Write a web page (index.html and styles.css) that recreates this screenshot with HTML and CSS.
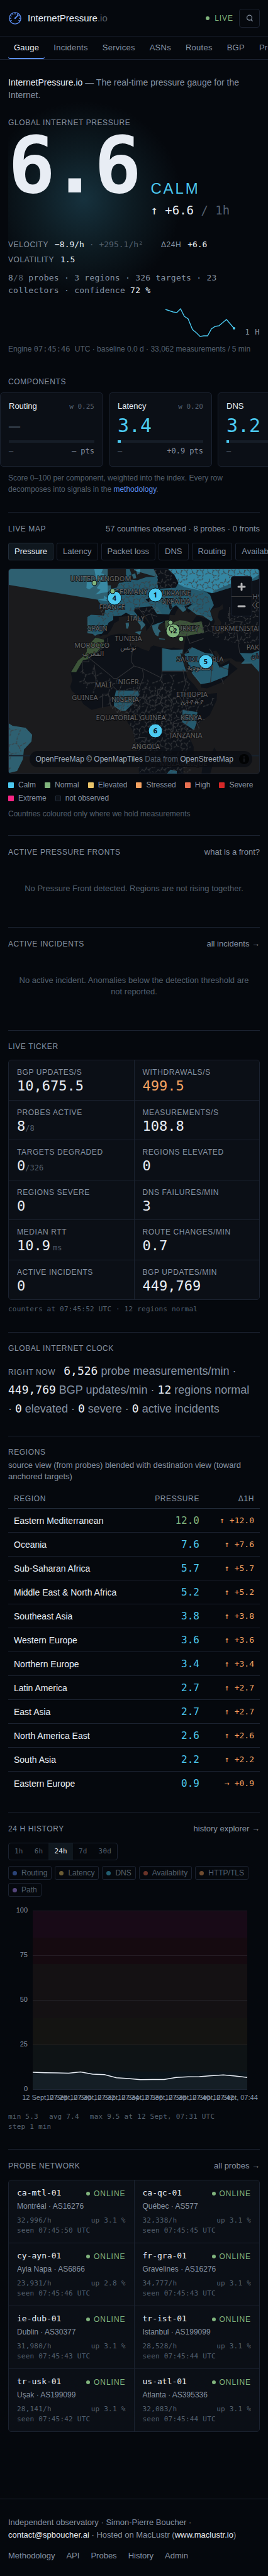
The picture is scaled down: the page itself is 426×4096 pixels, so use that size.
FILE: index.html
```html
<!DOCTYPE html>
<html lang="en">
<head>
    <meta charset="utf-8">
    <meta name="viewport" content="width=device-width, initial-scale=1">
    <title>InternetPressure.io</title>
    <link rel="stylesheet" href="styles.css">
</head>
<body>
    <header class="topbar">
        <a class="brand" href="#">
            <svg class="brand-icon" viewBox="0 0 24 24" fill="none" stroke="#5b8def" stroke-width="1.4" stroke-linecap="round">
                <circle cx="12" cy="12" r="10"/>
                <path d="M2.8 12h2M19.2 12h2M12 2.8v2M4 7.4l1.7 1M7.4 4l1 1.7M16.6 4l-1 1.7M20 7.4l-1.2.7M4 16.6l1.7-1M20 16.6l-1.7-1"/>
                <path d="M12 12l5.2-5.4" stroke-width="2"/>
                <circle cx="12" cy="12" r="0.6" fill="#5b8def"/>
            </svg>
            <span>InternetPressure<span class="brand-tld">.io</span></span>
        </a>
        <div class="topbar-right">
            <span class="live"><span class="dot"></span>LIVE</span>
            <button class="search-btn" type="button" aria-label="Search">
                <svg width="12" height="12" viewBox="0 0 12 12" fill="none" stroke="#8793a3" stroke-width="1.3">
                    <circle cx="5.5" cy="5.2" r="4"/>
                    <path d="M8 8.200l2.600 2.600"/>
                </svg>
            </button>
        </div>
    </header>

    <nav class="tabs">
        <a class="tab active" href="#">Gauge</a>
        <a class="tab" href="#">Incidents</a>
        <a class="tab" href="#">Services</a>
        <a class="tab" href="#">ASNs</a>
        <a class="tab" href="#">Routes</a>
        <a class="tab" href="#">BGP</a>
        <a class="tab" href="#">Probes</a>
    </nav>

    <main>
        <p class="intro"><strong>InternetPressure.io</strong> — The real-time pressure gauge for the Internet.</p>

        <section class="hero">
            <h1 class="label">Global Internet Pressure</h1>
            <div class="hero-main">
                <div class="big-number">6.6</div>
                <div class="hero-side">
                    <div class="status">CALM</div>
                    <div class="delta">↑ +6.6 <span class="dim">/ 1h</span></div>
                </div>
            </div>
            <div class="stats">
                <span><span class="label">Velocity</span> <b>−8.9/h</b> <span class="dim">· +295.1/h²</span></span>
                <span><span class="label">Δ24h</span> <b>+6.6</b></span>
                <span><span class="label">Volatility</span> <b>1.5</b></span>
            </div>
            <p class="coverage">8<span class="dim">/8</span> probes · 3 regions · 326 targets · 23 collectors · confidence <b>72 %</b></p>
            <div class="spark-row">
                <svg class="spark" viewBox="0 0 112 50" fill="none">
                    <path d="M1 2L7 4 13 6 19 7 25 1 31 13 37 17 44 34 50 39 56 45 62 44 68 44 74 33 80 29 86 28 92 23 98 18 110 32" stroke="#4cc9f0" stroke-width="1.4"/>
                    <circle cx="110" cy="32" r="2" fill="#4cc9f0"/>
                </svg>
                <span class="spark-label">1 H</span>
            </div>
            <p class="note engine">Engine <span class="mono">07:45:46 </span>UTC · baseline 0.0 d · 33,062 measurements / 5 min</p>
        </section>

        <section class="components">
            <div class="head"><h2 class="label">Components</h2></div>
            <div class="cards">
                <article class="card">
                    <div class="card-top"><h3>Routing</h3><span class="weight">w 0.25</span></div>
                    <div class="card-value none">—</div>
                    <div class="bar"></div>
                    <div class="card-foot"><span class="dim">—</span><span>— pts</span></div>
                </article>
                <article class="card">
                    <div class="card-top"><h3>Latency</h3><span class="weight">w 0.20</span></div>
                    <div class="card-value">3.4</div>
                    <div class="bar"><div class="bar-fill" style="width: 3.4%"></div></div>
                    <div class="card-foot"><span class="dim">—</span><span>+0.9 pts</span></div>
                </article>
                <article class="card">
                    <div class="card-top"><h3>DNS</h3><span class="weight">w 0.15</span></div>
                    <div class="card-value">3.2</div>
                    <div class="bar"><div class="bar-fill" style="width: 3.2%"></div></div>
                    <div class="card-foot"><span class="dim">—</span><span>+0.6 pts</span></div>
                </article>
            </div>
            <p class="note">Score 0–100 per component, weighted into the index. Every row decomposes into signals in the <a href="#">methodology</a>.</p>
        </section>

        <section class="section">
            <div class="head">
                <h2 class="label">Live map</h2>
                <span class="head-note">57 countries observed · 8 probes · 0 fronts</span>
            </div>
            <div class="filters">
                <button class="filter active" type="button">Pressure</button>
                <button class="filter" type="button">Latency</button>
                <button class="filter" type="button">Packet loss</button>
                <button class="filter" type="button">DNS</button>
                <button class="filter" type="button">Routing</button>
                <button class="filter" type="button">Availability</button>
            </div>
            <div class="map">
                <svg class="map-canvas" viewBox="0 0 398 325" preserveAspectRatio="xMidYMid slice">
                    <defs>
                        <pattern id="admin" width="46" height="42" patternUnits="userSpaceOnUse">
                            <path class="admin" d="M0 12l7 3 5-6 8 4 3 8 8-3 6 5 9-11M12 9l2-9M23 21l-3 9 6 6-2 6M37 23l4 8-5 11M0 31l9-4 11 3M20 13l7-8 9 1 3-6M26 36l10-3M9 27l-3-12"/>
                        </pattern>
                        <pattern id="adminWide" width="74" height="68" patternUnits="userSpaceOnUse">
                            <path class="admin" d="M0 20l18-4 10 10 20-5 8 10 18-11M28 26l-5 16 10 10-4 16M56 31l6 14-9 23M0 50l23-8M18 16l6-16M48 21l4-21M33 52l21-4"/>
                        </pattern>
                    </defs>
                    <g transform="scale(.546) translate(-26 -58)">
                        <!-- land -->
                        <g class="land">
                            <path d="M276 256l25 6 20-11 22-5 28 0 4 12-2 10 8 10 17 4 15 8 21 7 5-12 8-5 18 5 25 4 16-3 20 4 3 10-8 0 18 43 7 31 20 21 15 20 10 8 41-4-1 21-20 43-30 23-22 21-8 20 13 28 0 40-30 18v20H405l-2-55-10-46-8-28-14-21 5-25-8-15-17 5-19-13-34 5-31 8-23-16-15-23-20-17-4-12 6-20-5-23 18-29 30-28 1-17 16-18z"/>
                            <path d="M537 278l6-30 30-8 2-28-15 0 13-19 30 10 17 8-5-40-10-20-2-9 7-12 20-15 36-5 20-9 69-18v276l-22-31-46-1-14-10-26 3-17-25-10 2 17 30 6 10 25-14 2 7 22 18-19 15-26 24-44 18-18-2v-15l-12-15-23-26-15-50z"/>
                            <path d="M400 172l23-4 20 0 14 22 38-4-2 19-12 10-20 0-16 10-9-10-11-20-20-10z"/>
                            <path d="M255 197l10-6 38 2 4-18-20-23-2-5 18-4 0-8 10 7 7-27 20-3 7-14 10-1 10-5v-34h11l5 14-3 16 20 2 27-9 30-1 6-24 30-1V58h265v29l-118 28-20 15 8 5 11 30-11 17 8 26-5 4-25-17-17-2-20-15-8-5 18-13-26 7 6 11-10 7-10-10-10-10-10 7-6 10-4 10-36-2-14-22-50 4-3 10 34 40-14 16v-13l-13-17-20-16-10-5-13 8-24 2v11l-13 7-10 20-10 13-13 2-7 4-7-6-15-1z"/>
                            <path d="M624 577l7 12-19 66h-25l5-38 22-14z"/>
                        </g>
                        <path d="M612 182l8-9 20-5 8-8 2 14-12 6-4 18 10 14-2 18 12 10-6 6-20-2-10-14 8-20z" class="sea"/>
                        <!-- observed countries -->
                        <g class="calm">
                            <path d="M255 197l10-6 38 2 4-18-20-23-2-5 18-4 0-8 10 7 7-27 20-3 7-14 10-1 10-5v-34h11l5 14-3 16 20 2 27-9 30-1 6 16-3 17 50-5 10-12 83 30 9 7 11 30-11 17 8 26-5 4-25-17-17-2-20-15-8-5 18-13-26 7 6 11-10 7-10-10-10-10-10 7-6 10-4 10-36-2-14-22-50 4-3 10 34 40-14 16v-13l-13-17-20-16-10-5-13 8-24 2v11l-13 7-10 20-10 13-13 2-7 4-7-6-15-1z"/>
                            <path d="M490 58h264v16l-21 14-60 12-36 15-20 13-80-18-24-12z"/>
                            <path d="M443 222l15-6 20-6-15 10-3 10 9 10-5 2-3 12-8-4-8-16zM463 259l17 2 1 2-17-1zM393 241l19-3-4 12zM366 215l9-2 1 8-3 10-5 0z"/>
                            <path d="M384 74l10-4 3 14-8 2zM396 60l12-2 0 12-8 4z"/>
                            <path d="M472 288l28 5 33-1-2 13-6-3 17 53h-70z"/>
                            <path d="M547 292l13-7 37 17 23 3 20 40 27-12-4 35-50 20-28 5-25-31-23-57 14-4z"/>
                            <path d="M698 302l35 1 22-8v63l-22-25-31 1 11-12z"/>
                            <path d="M338 411l65 1 2 13-22 29-17 16h-15l-19-13 1-23z"/>
                            <path d="M532 468l43 6-3 34-7 19-35-24z"/>
                            <path d="M26 507l11 7 38 6 19 20-2 20-22 23-3 29-17 34-24 6z"/>
                            <path d="M485 655l12-13 18 4v9z"/>
                            <path d="M275 58h25l-5 12 8 2-1 13 11 13 1 7h9v10l-8 10-18 2-19 5 15-14-11-5 11-15-13-13zM253 95h17l3 13-13 9-8-4z"/>
                        </g>
                        <g class="calm">
                            <path d="M26 58h288v94L26 104z"/>
                            <path d="M390 58h364v29l-134 41L392 62z"/>
                        </g>
                        <path class="land" d="M448 58h42l18 17 12 23-8 14-49 3-5-15 3-18z"/>
                        <path class="land" d="M485 146l10 5 7 20-7 6-4-16zM424 146l22-8 6 6-20 10z"/>
                        <g class="normal">
                            <path d="M480 208l16-2 6 8 21-7 17 1 20 7 27-5 8 33-25 4-27 6-20-1-23-4-17-16z"/>
                            <path d="M278 257l25 6v15l-23 24-22 4v14l-16 3-20 35h-15l20-33 20-17 6-10v-16l14-12z"/>
                        </g>
                        <!-- borders -->
                        <path d="M490 58h264v16l-117 41-20 13-97-30z" fill="url(#admin)"/>
                        <path d="M310 145l40-45 110-10 5 30 50-5 90 15 15 75-30-15-60-22-60 4-10 14-40 0-50-8-30 15-25 5-10 20-40 15z" fill="url(#admin)"/>
                        <path d="M545 250l55-40 10 0 10 30 30 0 15-60 89-40v130l-60 5-40-10-60-20-50 10z" fill="url(#admin)"/>
                        <path d="M480 208l60 0 50 5 5 30-50 8-50-6z" fill="url(#admin)"/>
                        <path d="M448 60h42l25 40-5 12-50 2z" fill="url(#admin)"/>
                        <path d="M395 400h110l40 60 10 110v80H405l-20-130-50-50 5-58z" fill="url(#admin)"/>
                        <path d="M215 375l45-40 90 60 60-10 60-20h70l30 60 60 10-50 90-60 20-180-70z" fill="url(#adminWide)"/>
                        <path d="M26 515l50 12 0 40-50 80z" fill="url(#adminWide)"/>
                        <path class="border" d="M472 288v122M472 355h75M380 275l5 25-2 28 8 12 25 8 57 28M391 340l-8 6-42 30-10 0-5-5-66-54M342 378l-4 10M259 308v20h-19v35M275 336l5 52-38 2M313 258l0 20-55 40M330 400l10 10M415 350l4 20-16 42M472 408h-12l-4 40M533 350l8 40-10 30 10 40M530 505l-25 3-2 40M403 548h20v20h30l5 20M298 462v-40l18 0 8 40M404 172l18 22 18-6 8 22-10 16M440 190l18 6M543 248l10 26 40-14M560 285l-20 18M640 342l25 8M613 388l6-60M645 375l6 18M620 305l-10-15M668 168v40l40 4M698 302l-8-60"/>
                        <path class="line" d="M26 601h728"/>
                    </g>
                    <g class="places">
                        <text x="146" y="19">UNITED KINGDOM</text>
                        <text x="164" y="64">FRANCE</text>
                        <text x="194" y="40">GERMANY</text>
                        <text x="266" y="42">UKRAINE</text>
                        <text x="266" y="55">УКРАЇНА</text>
                        <text x="202" y="82">ITALY</text>
                        <text x="141" y="98">SPAIN</text>
                        <text x="190" y="114">TUNISIA</text>
                        <text x="190" y="128">تونس</text>
                        <text x="132" y="125">MOROCCO</text>
                        <text x="134" y="138">المغرب</text>
                        <text x="282" y="98">TURKEY</text>
                        <text x="363" y="98">TURKMENISTAN</text>
                        <text x="388" y="48">KAZAKHSTAN</text>
                        <text x="388" y="61">ҚАЗАҚСТАН</text>
                        <text x="403" y="128">PAKISTAN</text>
                        <text x="403" y="142">پاکستان</text>
                        <text x="304" y="147">SAUDI ARABIA</text>
                        <text x="304" y="160">السعودية</text>
                        <text x="190" y="183">NIGER</text>
                        <text x="150" y="188">MALI</text>
                        <text x="121" y="208">GUINEA</text>
                        <text x="185" y="211">NIGERIA</text>
                        <text x="194" y="240">EQUATORIAL GUINEA</text>
                        <text x="291" y="203">ETHIOPIA</text>
                        <text x="291" y="215">ኢትዮጵያ</text>
                        <text x="290" y="240">KENYA</text>
                        <text x="281" y="268">TANZANIA</text>
                        <text x="218" y="286">ANGOLA</text>
                        <text x="278" y="313">MOZAMBIQUE</text>
                    </g>
                    <g class="clusters">
                        <circle cx="168" cy="46" r="11"/><text x="168" y="50">4</text>
                        <circle cx="233" cy="41" r="11"/><text x="233" y="45">1</text>
                        <circle class="ok" cx="261" cy="98" r="11"/><text x="261" y="102">12</text>
                        <circle cx="313" cy="147" r="11"/><text x="313" y="151">5</text>
                        <circle cx="233" cy="257" r="11"/><text x="233" y="261">6</text>
                        <circle class="ok" cx="136" cy="22" r="4"/>
                        <circle class="ok" cx="165" cy="35" r="4"/>
                        <circle class="ok" cx="257" cy="85" r="4"/>
                        <circle class="ok" cx="259" cy="95" r="4"/>
                        <circle class="ok" cx="274" cy="111" r="4"/>
                    </g>
                </svg>
                <div class="map-zoom">
                    <button type="button" aria-label="Zoom in"><svg width="16" height="16" viewBox="0 0 16 16" stroke="#b4b4b6" stroke-width="3" stroke-linecap="round"><path d="M3 8h10M8 3v10"/></svg></button>
                    <button type="button" aria-label="Zoom out"><svg width="16" height="16" viewBox="0 0 16 16" stroke="#b4b4b6" stroke-width="3" stroke-linecap="round"><path d="M3 8h10"/></svg></button>
                </div>
                <div class="map-credit">
                    <span><a href="#">OpenFreeMap</a> <a href="#">© OpenMapTiles</a> Data from <a href="#">OpenStreetMap</a></span>
                    <svg width="16" height="16" viewBox="0 0 16 16"><circle cx="8" cy="8" r="8" fill="#020304"/><path d="M8 3.500v2M8 7v5.500" stroke="#14171c" stroke-width="2.600"/></svg>
                </div>
            </div>
            <ul class="legend">
                <li><i class="calm-bg"></i>Calm</li>
                <li><i class="normal-bg"></i>Normal</li>
                <li><i class="elevated-bg"></i>Elevated</li>
                <li><i class="stressed-bg"></i>Stressed</li>
                <li><i class="high-bg"></i>High</li>
                <li><i class="severe-bg"></i>Severe</li>
                <li><i class="extreme-bg"></i>Extreme</li>
                <li><i class="unseen-bg"></i>not observed</li>
            </ul>
            <p class="note">Countries coloured only where we hold measurements</p>
        </section>

        <section class="section">
            <div class="head">
                <h2 class="label">Active pressure fronts</h2>
                <a class="head-note" href="#">what is a front?</a>
            </div>
            <p class="empty">No Pressure Front detected. Regions are not rising together.</p>
        </section>

        <section class="section">
            <div class="head">
                <h2 class="label">Active incidents</h2>
                <a class="head-note" href="#">all incidents →</a>
            </div>
            <p class="empty">No active incident. Anomalies below the detection threshold are not reported.</p>
        </section>

        <section class="section ticker">
            <div class="head"><h2 class="label">Live ticker</h2></div>
            <div class="grid">
                <div class="cell"><div class="label">BGP updates/s</div><div class="value">10,675.5</div></div>
                <div class="cell"><div class="label">Withdrawals/s</div><div class="value warn">499.5</div></div>
                <div class="cell"><div class="label">Probes active</div><div class="value">8<small>/8</small></div></div>
                <div class="cell"><div class="label">Measurements/s</div><div class="value">108.8</div></div>
                <div class="cell"><div class="label">Targets degraded</div><div class="value">0<small>/326</small></div></div>
                <div class="cell"><div class="label">Regions elevated</div><div class="value">0</div></div>
                <div class="cell"><div class="label">Regions severe</div><div class="value">0</div></div>
                <div class="cell"><div class="label">DNS failures/min</div><div class="value">3</div></div>
                <div class="cell"><div class="label">Median RTT</div><div class="value">10.9<small class="unit">ms</small></div></div>
                <div class="cell"><div class="label">Route changes/min</div><div class="value">0.7</div></div>
                <div class="cell"><div class="label">Active incidents</div><div class="value">0</div></div>
                <div class="cell"><div class="label">BGP updates/min</div><div class="value">449,769</div></div>
            </div>
            <p class="small-mono">counters at 07:45:52 UTC · 12 regions normal</p>
        </section>

        <section class="section clock-section">
            <div class="head"><h2 class="label">Global Internet clock</h2></div>
            <p class="clock"><span class="label">Right now</span> <b>6,526</b> probe measurements/min · <b>449,769</b> BGP updates/min · <b>12</b> regions normal ·&nbsp;<b>0</b> elevated · <b>0</b> severe · <b>0</b> active incidents</p>
        </section>

        <section class="section regions">
            <h2 class="label">Regions</h2>
            <p class="sub">source view (from probes) blended with destination view (toward anchored targets)</p>
            <table>
                <thead>
                    <tr><th class="label">Region</th><th class="label">Pressure</th><th class="label">Δ1h</th></tr>
                </thead>
                <tbody>
                    <tr><td>Eastern Mediterranean</td><td class="ok">12.0</td><td>↑ +12.0</td></tr>
                    <tr><td>Oceania</td><td>7.6</td><td>↑ +7.6</td></tr>
                    <tr><td>Sub-Saharan Africa</td><td>5.7</td><td>↑ +5.7</td></tr>
                    <tr><td>Middle East &amp; North Africa</td><td>5.2</td><td>↑ +5.2</td></tr>
                    <tr><td>Southeast Asia</td><td>3.8</td><td>↑ +3.8</td></tr>
                    <tr><td>Western Europe</td><td>3.6</td><td>↑ +3.6</td></tr>
                    <tr><td>Northern Europe</td><td>3.4</td><td>↑ +3.4</td></tr>
                    <tr><td>Latin America</td><td>2.7</td><td>↑ +2.7</td></tr>
                    <tr><td>East Asia</td><td>2.7</td><td>↑ +2.7</td></tr>
                    <tr><td>North America East</td><td>2.6</td><td>↑ +2.6</td></tr>
                    <tr><td>South Asia</td><td>2.2</td><td>↑ +2.2</td></tr>
                    <tr><td>Eastern Europe</td><td>0.9</td><td>→ +0.9</td></tr>
                </tbody>
            </table>
        </section>

        <section class="section history">
            <div class="head">
                <h2 class="label">24 h history</h2>
                <a class="head-note" href="#">history explorer →</a>
            </div>
            <div class="ranges">
                <button type="button">1h</button>
                <button type="button">6h</button>
                <button type="button" class="active">24h</button>
                <button type="button">7d</button>
                <button type="button">30d</button>
            </div>
            <div class="chips">
                <button class="chip" type="button"><i class="routing-bg"></i>Routing</button>
                <button class="chip" type="button"><i class="latency-bg"></i>Latency</button>
                <button class="chip" type="button"><i class="dns-bg"></i>DNS</button>
                <button class="chip" type="button"><i class="avail-bg"></i>Availability</button>
                <button class="chip" type="button"><i class="http-bg"></i>HTTP/TLS</button>
                <button class="chip" type="button"><i class="path-bg"></i>Path</button>
            </div>
            <svg class="chart" viewBox="0 0 400 322">
                <rect x="39" y="14" width="341" height="43" fill="#180a17"/>
                <rect x="39" y="57" width="341" height="42" fill="#150a10"/>
                <rect x="39" y="99" width="341" height="86" fill="#141113"/>
                <rect x="39" y="185" width="341" height="43" fill="#141412"/>
                <rect x="39" y="228" width="341" height="42" fill="#0e1315"/>
                <rect x="39" y="270" width="341" height="29" fill="#0a141b"/>
                <path d="M39 14.500h341M39 85.500h341M39 156.500h341M39 227.500h341" stroke="#94a3b8" stroke-opacity=".13"/>
                <path d="M39 271l19 .7 19 .3 19 .4 19-1.800 19 3.500 19 .7 19 4.900 19 1.400 19 1.700 19-.3h19l19-3.200 19-1 18-.4 19-1.400 19-1.300 19 1.700 19 2.400V299H39z" fill="#141e25"/>
                <path d="M39 271l19 .7 19 .3 19 .4 19-1.800 19 3.500 19 .7 19 4.900 19 1.400 19 1.700 19-.3h19l19-3.200 19-1 18-.4 19-1.400 19-1.300 19 1.700 19 2.400" fill="none" stroke="#e8edf4" stroke-width="1.500"/>
                <path d="M39 298.500h341" stroke="#1c2432"/>
                <g class="axis-y">
                    <text x="31" y="17">100</text>
                    <text x="31" y="88">75</text>
                    <text x="31" y="159">50</text>
                    <text x="31" y="230">25</text>
                    <text x="31" y="301">0</text>
                </g>
                <g class="axis-x">
                    <text x="58" y="315">12 Sept, 07:28</text>
                    <text x="96" y="315">12 Sept, 07:30</text>
                    <text x="134" y="315">12 Sept, 07:32</text>
                    <text x="172" y="315">12 Sept, 07:34</text>
                    <text x="210" y="315">12 Sept, 07:36</text>
                    <text x="247" y="315">12 Sept, 07:38</text>
                    <text x="285" y="315">12 Sept, 07:40</text>
                    <text x="323" y="315">12 Sept, 07:42</text>
                    <text x="361" y="315">12 Sept, 07:44</text>
                </g>
            </svg>
            <p class="small-mono summary"><span>min 5.3</span><span>avg 7.4</span><span>max 9.5 at 12 Sept, 07:31 UTC</span><span>step 1 min</span></p>
        </section>

        <section class="section probes">
            <div class="head">
                <h2 class="label">Probe network</h2>
                <a class="head-note" href="#">all probes →</a>
            </div>
            <div class="grid">
                <div class="cell probe">
                    <div class="row"><b>ca-mtl-01</b><span class="online"><span class="dot"></span>ONLINE</span></div>
                    <div class="place">Montréal · AS16276</div>
                    <div class="row small-mono"><span>32,996/h</span><span>up 3.1 %</span></div>
                    <div class="small-mono">seen 07:45:50 UTC</div>
                </div>
                <div class="cell probe">
                    <div class="row"><b>ca-qc-01</b><span class="online"><span class="dot"></span>ONLINE</span></div>
                    <div class="place">Québec · AS577</div>
                    <div class="row small-mono"><span>32,338/h</span><span>up 3.1 %</span></div>
                    <div class="small-mono">seen 07:45:45 UTC</div>
                </div>
                <div class="cell probe">
                    <div class="row"><b>cy-ayn-01</b><span class="online"><span class="dot"></span>ONLINE</span></div>
                    <div class="place">Ayia Napa · AS6866</div>
                    <div class="row small-mono"><span>23,931/h</span><span>up 2.8 %</span></div>
                    <div class="small-mono">seen 07:45:46 UTC</div>
                </div>
                <div class="cell probe">
                    <div class="row"><b>fr-gra-01</b><span class="online"><span class="dot"></span>ONLINE</span></div>
                    <div class="place">Gravelines · AS16276</div>
                    <div class="row small-mono"><span>34,777/h</span><span>up 3.1 %</span></div>
                    <div class="small-mono">seen 07:45:43 UTC</div>
                </div>
                <div class="cell probe">
                    <div class="row"><b>ie-dub-01</b><span class="online"><span class="dot"></span>ONLINE</span></div>
                    <div class="place">Dublin · AS30377</div>
                    <div class="row small-mono"><span>31,980/h</span><span>up 3.1 %</span></div>
                    <div class="small-mono">seen 07:45:43 UTC</div>
                </div>
                <div class="cell probe">
                    <div class="row"><b>tr-ist-01</b><span class="online"><span class="dot"></span>ONLINE</span></div>
                    <div class="place">Istanbul · AS199099</div>
                    <div class="row small-mono"><span>28,528/h</span><span>up 3.1 %</span></div>
                    <div class="small-mono">seen 07:45:44 UTC</div>
                </div>
                <div class="cell probe">
                    <div class="row"><b>tr-usk-01</b><span class="online"><span class="dot"></span>ONLINE</span></div>
                    <div class="place">Uşak · AS199099</div>
                    <div class="row small-mono"><span>28,141/h</span><span>up 3.1 %</span></div>
                    <div class="small-mono">seen 07:45:42 UTC</div>
                </div>
                <div class="cell probe">
                    <div class="row"><b>us-atl-01</b><span class="online"><span class="dot"></span>ONLINE</span></div>
                    <div class="place">Atlanta · AS395336</div>
                    <div class="row small-mono"><span>32,083/h</span><span>up 3.1 %</span></div>
                    <div class="small-mono">seen 07:45:44 UTC</div>
                </div>
            </div>
        </section>
    </main>

    <footer class="footer">
        <p>Independent observatory · Simon-Pierre Boucher · <a class="strong" href="#">contact@spboucher.ai</a> · Hosted on MacLustr (<a class="strong" href="#">www.maclustr.io</a>)</p>
        <nav class="footer-links">
            <a href="#">Methodology</a>
            <a href="#">API</a>
            <a href="#">Probes</a>
            <a href="#">History</a>
            <a href="#">Admin</a>
        </nav>
    </footer>
</body>
</html>
```

FILE: styles.css
```css
:root {
    --bg: #05080d;
    --panel: #0b0f16;
    --line: #1b2230;
    --text: #e8edf4;
    --muted: #8793a3;
    --dim: #54606e;
    --blue: #5b8def;
    --calm: #4cc9f0;
    --normal: #81b47d;
    --warn: #f4a261;
    --sans: "Liberation Sans", Arial, sans-serif;
    --mono: "DejaVu Sans Mono", "Liberation Mono", monospace;
}

* {
    box-sizing: border-box;
}

body {
    margin: 0;
    background: var(--bg);
    color: var(--muted);
    font-family: var(--sans);
    font-size: 13px;
    line-height: 18px;
    overflow-x: hidden;
}

a {
    color: inherit;
    text-decoration: none;
}

p,
h1,
h2,
h3,
ul {
    margin: 0;
    padding: 0;
}

b {
    font-weight: 500;
    color: var(--text);
}

button {
    font: inherit;
    color: inherit;
    background: none;
    border: 0;
    padding: 0;
    cursor: pointer;
}

.mono {
    font-family: var(--mono);
    white-space: pre;
}

.dim {
    color: var(--dim);
}

.label {
    font-family: var(--sans);
    font-size: 12px;
    font-weight: 500;
    line-height: 16px;
    letter-spacing: 0.05em;
    text-transform: uppercase;
    color: var(--muted);
}

.dot {
    display: inline-block;
    width: 6px;
    height: 6px;
    border-radius: 50%;
    background: var(--normal);
}

/* header */

.topbar {
    display: flex;
    align-items: center;
    justify-content: space-between;
    height: 57px;
    padding: 0 13px;
}

.brand {
    display: flex;
    align-items: center;
    gap: 9px;
    font-size: 15px;
    font-weight: 500;
    color: var(--text);
}

.brand-icon {
    width: 22px;
    height: 22px;
}

.brand-tld {
    color: var(--dim);
}

.topbar-right {
    display: flex;
    align-items: center;
    gap: 9px;
}

.live,
.online {
    display: flex;
    align-items: center;
    gap: 8px;
    font-size: 12px;
    letter-spacing: 0.08em;
    color: var(--normal);
}

.search-btn {
    display: flex;
    align-items: center;
    justify-content: center;
    width: 33px;
    height: 30px;
    border: 1px solid var(--line);
    border-radius: 4px;
}

.tabs {
    display: flex;
    gap: 5px;
    height: 38px;
    padding: 0 13px;
    border-top: 1px solid var(--line);
    border-bottom: 1px solid var(--line);
    overflow: hidden;
}

.tab {
    flex: none;
    padding: 9px 9px 0;
    border-bottom: 2px solid transparent;
    border-radius: 4px;
    letter-spacing: 0.02em;
}

.tab.active {
    color: var(--text);
    border-bottom-color: var(--blue);
}

/* hero */

main {
    padding: 0 13px;
}

.intro {
    padding-top: 26px;
    font-size: 14px;
    line-height: 20px;
}

.intro strong {
    font-weight: 500;
    color: var(--text);
}

.hero {
    padding-top: 26px;
    background: radial-gradient(circle 156px at 120px 156px, #16313d, #0d1b22 50%, transparent);
}

.hero-main {
    display: flex;
    gap: 21px;
    height: 154px;
}

.big-number {
    font-family: var(--mono);
    font-size: 124px;
    font-weight: 700;
    line-height: 121px;
    letter-spacing: -0.05em;
    color: var(--text);
}

.hero-side {
    align-self: flex-end;
    padding-bottom: 6px;
}

.status {
    font-size: 24px;
    font-weight: 500;
    line-height: 34px;
    letter-spacing: 0.12em;
    color: var(--calm);
}

.delta {
    font-family: var(--mono);
    font-size: 19px;
    line-height: 34px;
    color: var(--text);
}

.stats {
    display: flex;
    flex-wrap: wrap;
    column-gap: 28px;
    padding-top: 20px;
    font-family: var(--mono);
    line-height: 24px;
}

.stats .label {
    margin-right: 2px;
}

.coverage {
    padding-top: 7px;
    font-family: var(--mono);
    line-height: 20px;
    letter-spacing: 0.02em;
}

.spark-row {
    display: flex;
    align-items: flex-end;
    justify-content: flex-end;
    gap: 16px;
    padding-top: 18px;
}

.spark {
    width: 112px;
    height: 50px;
}

.spark-label {
    font-family: var(--mono);
    font-size: 12px;
    line-height: 24px;
    letter-spacing: 0.05em;
}

.note {
    font-size: 12px;
    line-height: 18px;
    color: var(--dim);
}

.note a {
    color: var(--blue);
}

.engine {
    padding-top: 6px;
}

/* sections */

.section {
    padding-top: 17px;
    border-top: 1px solid var(--line);
}

.head {
    display: flex;
    align-items: baseline;
    justify-content: space-between;
    margin-bottom: 13px;
}

.components {
    padding: 35px 0 27px;
}

.components .head {
    margin-bottom: 9px;
}

.cards {
    display: flex;
    gap: 9px;
    margin: 0 -13px 9px;
    overflow: hidden;
}

.card {
    flex: none;
    width: 164px;
    padding: 12px 13px 15px;
    background: var(--panel);
    border: 1px solid var(--line);
    border-radius: 5px;
}

.card-top,
.card-foot {
    display: flex;
    align-items: baseline;
    justify-content: space-between;
    height: 18px;
}

.card h3 {
    font-size: 13px;
    font-weight: 500;
    color: var(--text);
}

.weight {
    font-family: var(--mono);
    font-size: 11px;
    color: var(--dim);
}

.card-value {
    padding: 5px 0 6px;
    font-family: var(--mono);
    font-size: 30px;
    line-height: 34px;
    color: var(--calm);
}

.card-value.none {
    color: #38424f;
}

.bar {
    height: 4px;
    margin-bottom: 4px;
    background: #161d27;
}

.bar-fill {
    height: 4px;
    background: var(--calm);
}

.card-foot {
    font-family: var(--mono);
    font-size: 12px;
}

/* map */

.filters {
    display: flex;
    gap: 5px;
    margin: 0 -13px 13px 0;
    overflow: hidden;
}

.filter {
    flex: none;
    height: 28px;
    padding: 0 9px;
    border: 1px solid var(--line);
    border-radius: 3px;
}

.filter.active {
    color: var(--text);
    background: #0f171e;
    border-color: #222d3a;
}

.map {
    position: relative;
    border: 1px solid var(--line);
    border-radius: 5px;
    overflow: hidden;
    background: #1b1b1d;
}

.map-canvas {
    display: block;
    width: 100%;
}

.land {
    fill: #0d1118;
}

.sea {
    fill: #1b1b1d;
}

.calm {
    fill: var(--calm);
    fill-opacity: 0.4;
}

.normal {
    fill: #3d5439;
}

.admin {
    fill: none;
    stroke: #3b3d40;
    stroke-width: 2;
    stroke-dasharray: 7 3;
}

.border {
    fill: none;
    stroke: #303236;
    stroke-width: 2;
}

.line {
    stroke: #17222e;
    stroke-width: 4;
}

.places text {
    font-family: "Noto Sans", "DejaVu Sans", sans-serif;
    font-size: 11px;
    text-anchor: middle;
    fill: #646466;
    stroke: #0c0d0f;
    stroke-opacity: 0.8;
    stroke-width: 2;
    paint-order: stroke;
}

.clusters circle {
    fill: var(--calm);
    stroke: #070b11;
    stroke-width: 1;
}

.clusters .ok {
    fill: var(--normal);
}

.clusters text {
    font-family: "Noto Sans", sans-serif;
    font-size: 11px;
    font-weight: 700;
    text-anchor: middle;
    fill: #0a0e14;
}

.map-zoom {
    position: absolute;
    top: 11px;
    right: 11px;
    width: 34px;
    border: 1px solid var(--line);
    border-radius: 4px;
    background: var(--panel);
}

.map-zoom button {
    display: flex;
    align-items: center;
    justify-content: center;
    width: 100%;
    height: 31px;
}

.map-zoom button + button {
    border-top: 1px solid #3a3a3c;
}

.map-credit {
    position: absolute;
    right: 11px;
    bottom: 10px;
    display: flex;
    align-items: center;
    gap: 9px;
    height: 26px;
    padding: 0 5px 0 9px;
    border-radius: 13px;
    background: rgba(10, 13, 19, 0.85);
    font-size: 12px;
    color: var(--dim);
    white-space: nowrap;
}

.map-credit a {
    color: #a0acba;
}

.legend {
    display: flex;
    flex-wrap: wrap;
    gap: 3px 14px;
    padding: 8px 0 7px;
    list-style: none;
    font-size: 12px;
}

.legend li {
    display: flex;
    align-items: center;
    gap: 7px;
}

.legend i {
    width: 9px;
    height: 9px;
    border-radius: 1px;
}

.calm-bg { background: var(--calm); }
.normal-bg { background: var(--normal); }
.elevated-bg { background: #e9c46a; }
.stressed-bg { background: #f4a261; }
.high-bg { background: #e76f51; }
.severe-bg { background: #d62828; }
.extreme-bg { background: #f72585; }
.unseen-bg { background: #0d1118; border: 1px solid #222d3a; }

.legend + .note {
    padding-bottom: 25px;
}

.empty {
    padding: 27px 9px 52px;
    text-align: center;
    color: var(--dim);
}

/* ticker and probe grids */

.grid {
    display: grid;
    grid-template-columns: 1fr 1fr;
    gap: 1px;
    border: 1px solid var(--line);
    border-radius: 5px;
    background: var(--line);
    overflow: hidden;
}

.ticker .grid {
    min-height: 382px;
}

.cell {
    padding: 11px 13px 7px;
    background: var(--panel);
}

.value {
    font-family: var(--mono);
    font-size: 22px;
    line-height: 28px;
    color: var(--text);
}

.value.warn {
    color: var(--warn);
}

.value small {
    font-size: 12px;
    line-height: 16px;
    color: var(--dim);
}

.value .unit {
    padding-left: 4px;
}

.small-mono {
    font-family: var(--mono);
    font-size: 11px;
    line-height: 16px;
    letter-spacing: 0.02em;
    color: var(--dim);
}

.ticker .small-mono {
    padding: 7px 0 28px;
}

.clock {
    padding-bottom: 28px;
    font-size: 18px;
    line-height: 30px;
}

.clock .label {
    margin-right: 8px;
}

.clock b {
    font-family: var(--mono);
    line-height: 20px;
}

/* regions */

.regions {
    padding-bottom: 26px;
}

.sub {
    padding: 4px 0 10px;
}

table {
    width: 100%;
    border-collapse: separate;
    border-spacing: 0;
}

th,
td {
    height: 38px;
    padding: 0 9px;
    text-align: right;
    border-bottom: 1px solid var(--line);
}

th {
    height: 32px;
}

td:first-child {
    font-size: 14px;
    color: var(--text);
}

th:first-child,
td:first-child {
    text-align: left;
}

tr:last-child td {
    border-bottom: 0;
}

td:nth-child(2) {
    font-family: var(--mono);
    font-size: 16px;
    color: var(--calm);
}

td.ok {
    color: var(--normal);
}

td:nth-child(3) {
    width: 87px;
    font-family: var(--mono);
    white-space: nowrap;
    color: var(--warn);
}

/* undo the cell colour for the one region in the normal band */
td.ok:nth-child(2) {
    color: var(--normal);
}

thead th {
    border-bottom-color: #222b38;
}

/* history */

.ranges {
    display: flex;
    width: fit-content;
    height: 28px;
    border: 1px solid var(--line);
    border-radius: 4px;
    overflow: hidden;
    color: var(--dim);
}

.ranges button {
    padding: 0 9px;
    font-family: var(--mono);
    font-size: 11px;
    letter-spacing: 0.02em;
}

.ranges .active {
    color: var(--text);
    background: #0f171e;
}

.chips {
    display: flex;
    flex-wrap: wrap;
    gap: 5px;
    padding: 9px 0 8px;
}

.chip {
    display: flex;
    align-items: center;
    gap: 7px;
    height: 22px;
    padding: 0 6px;
    border: 1px solid var(--line);
    border-radius: 3px;
    font-size: 12px;
    color: var(--dim);
}

.chip i {
    width: 7px;
    height: 7px;
    border-radius: 50%;
}

.routing-bg { background: #2b4478; }
.latency-bg { background: #6b5c34; }
.dns-bg { background: #225d70; }
.avail-bg { background: #6b3429; }
.http-bg { background: #704c30; }
.path-bg { background: #54457a; }

.chart {
    display: block;
    width: 100%;
}

.chart text {
    font-family: var(--sans);
    font-size: 11px;
    fill: var(--muted);
}

.axis-y {
    text-anchor: end;
}

.axis-x {
    text-anchor: middle;
}

.summary {
    display: flex;
    flex-wrap: wrap;
    column-gap: 17px;
    padding: 12px 0 27px;
}

/* probes */

.probe {
    padding-bottom: 11px;
}

.row {
    display: flex;
    align-items: baseline;
    justify-content: space-between;
}

.probe b {
    font-family: var(--mono);
}

.probe .online {
    gap: 6px;
}

.place {
    padding: 2px 0 6px;
    font-size: 12px;
}

/* footer */

.footer {
    margin-top: 106px;
    padding: 27px 13px 26px;
    border-top: 1px solid var(--line);
    line-height: 20px;
}

.strong {
    color: var(--text);
}

.footer-links {
    display: flex;
    gap: 18px;
    padding-top: 13px;
}
```
